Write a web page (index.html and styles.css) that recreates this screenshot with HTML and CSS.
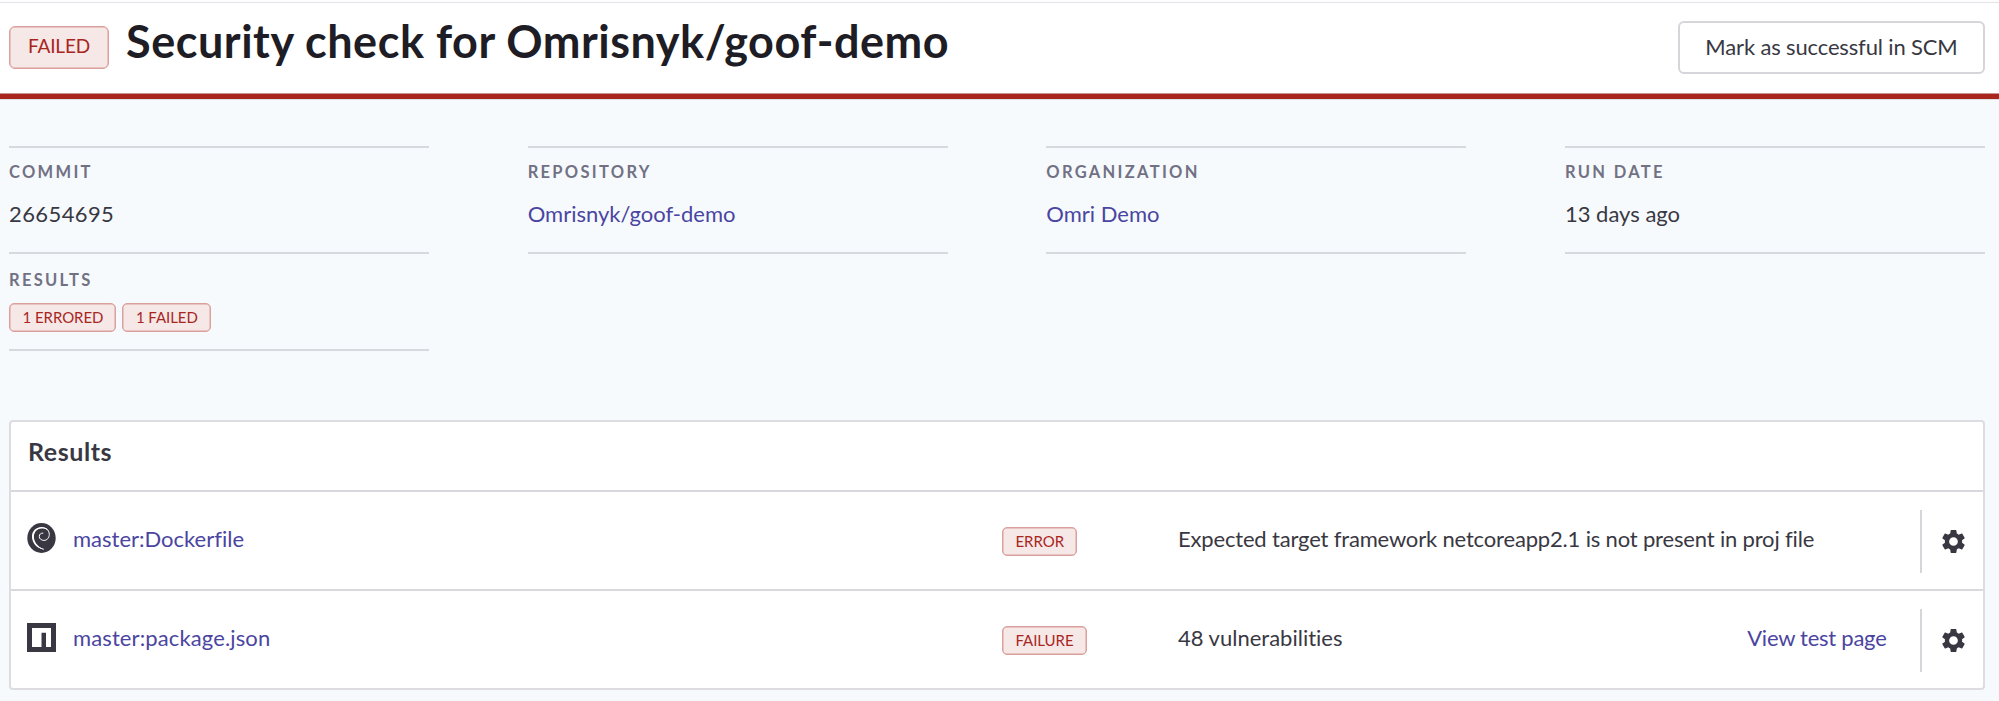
FILE: index.html
```html
<!DOCTYPE html>
<html lang="en">
<head>
<meta charset="utf-8">
<title>Security check for Omrisnyk/goof-demo</title>
<link rel="stylesheet" href="styles.css">
</head>
<body>
<svg class="sprite" aria-hidden="true">
  <symbol id="gear" viewBox="2 2 20 20">
    <path d="M19.43 12.98c.04-.32.07-.64.07-.98s-.03-.66-.07-.98l2.11-1.65c.19-.15.24-.42.12-.64l-2-3.46c-.12-.22-.39-.3-.61-.22l-2.49 1c-.52-.4-1.08-.73-1.69-.98l-.38-2.65C14.46 2.18 14.25 2 14 2h-4c-.25 0-.46.18-.49.42l-.38 2.65c-.61.25-1.17.59-1.69.98l-2.49-1c-.23-.09-.49 0-.61.22l-2 3.46c-.13.22-.07.49.12.64l2.11 1.65c-.04.32-.07.65-.07.98s.03.66.07.98l-2.11 1.65c-.19.15-.24.42-.12.64l2 3.46c.12.22.39.3.61.22l2.49-1c.52.4 1.08.73 1.69.98l.38 2.65c.03.24.24.42.49.42h4c.25 0 .46-.18.49-.42l.38-2.65c.61-.25 1.17-.59 1.69-.98l2.49 1c.23.09.49 0 .61-.22l2-3.46c.12-.22.07-.49-.12-.64l-2.11-1.65zM12 15.8a3.8 3.8 0 1 1 0-7.6 3.8 3.8 0 0 1 0 7.6z"/>
  </symbol>
</svg>

<header class="header">
  <span class="badge badge-large">FAILED</span>
  <h1 class="title">Security check for Omrisnyk/goof-demo</h1>
  <button class="button" type="button">Mark as successful in SCM</button>
</header>

<main class="content">
  <dl class="meta">
    <div class="meta-item"><dt>COMMIT</dt><dd class="digits">26654695</dd></div>
    <div class="meta-item"><dt>REPOSITORY</dt><dd><a href="#">Omrisnyk/goof-demo</a></dd></div>
    <div class="meta-item"><dt>ORGANIZATION</dt><dd><a href="#">Omri Demo</a></dd></div>
    <div class="meta-item"><dt>RUN DATE</dt><dd class="date">13 days ago</dd></div>
    <div class="meta-item meta-results">
      <dt>RESULTS</dt>
      <dd class="badges"><span class="badge">1 ERRORED</span><span class="badge">1 FAILED</span></dd>
    </div>
  </dl>

  <section class="panel">
    <h2 class="panel-title">Results</h2>
    <div class="row">
      <div class="file">
        <svg class="icon icon-debian" viewBox="0 0 29 30">
          <ellipse cx="14.5" cy="15" rx="14.2" ry="15" fill="#393842"/>
          <path d="M16.5 26.2C10 24.5 6 19.5 6 13.8 6 8.500 10 4.800 15 4.800c4.400 0 7.300 2.900 7.300 6.600 0 3.500-2.300 6-5.400 6-2.600 0-4.600-1.600-4.600-4 0-2.100 1.500-3.500 3.600-3.300" fill="none" stroke="#fff" stroke-width="1" stroke-linecap="round"/>
          <path d="M16.500 26.500C9.500 25 5 20 5 13.500 5 7.700 9.600 4 15 4.100c3.400.1 6.300 1.900 7.200 4.900-1.700-2.500-4.200-3.800-7.200-3.700C10.200 5.500 6.900 9 6.900 13.700c0 5.300 3.800 9.800 9.600 12.800z" fill="#fff"/>
        </svg>
        <a class="file-name" href="#">master:Dockerfile</a>
      </div>
      <div class="status"><span class="badge">ERROR</span></div>
      <div class="message message-long">Expected target framework netcoreapp2.1 is not present in proj file</div>
      <div class="settings"><svg class="gear"><use href="#gear"/></svg></div>
    </div>
    <div class="row">
      <div class="file">
        <svg class="icon icon-npm" viewBox="0 0 29 29">
          <path d="M0 0h29v29H0z" fill="#393842"/>
          <path d="M5 5h19v19h-5V9.700h-4.500V24H5z" fill="#fff"/>
        </svg>
        <a class="file-name file-package" href="#">master:package.json</a>
      </div>
      <div class="status"><span class="badge">FAILURE</span></div>
      <div class="message">48 vulnerabilities</div>
      <a class="view" href="#">View test page</a>
      <div class="settings"><svg class="gear"><use href="#gear"/></svg></div>
    </div>
  </section>
</main>
</body>
</html>
```
FILE: styles.css
```css
* { box-sizing: border-box; }
body {
  margin: 0;
  padding-top: 2px;
  min-height: 701px;
  background: #f6fafd;
  color: #393842;
  font: 22px/28px Lato, "Open Sans", sans-serif;
  font-variant-ligatures: none;
  overflow: hidden;
}
a { color: #4b45a1; text-decoration: none; }
.sprite { display: none; }

.header {
  display: flex;
  align-items: center;
  height: 97px;
  padding: 0 14px 2px 9px;
  background: #fff;
  border-top: 1px solid #e4e5ea;
  border-bottom: 5px solid #a9261e;
  box-shadow: inset 0 -1px #c99591, 0 1px #dde0e4, 0 -2px #fdfdfe;
}
.title {
  margin: 0 auto 0 17px;
  padding-bottom: 13px;
  color: #1e1c24;
  font-size: 45px;
  font-weight: 700;
  line-height: 54px;
  letter-spacing: .53px;
  white-space: nowrap;
}
.button {
  width: 307px;
  height: 53px;
  padding: 0 0 2px;
  border: 2px solid #d5d5da;
  border-radius: 6px;
  background: #fff;
  color: #393842;
  font: inherit;
  letter-spacing: -.15px;
}

.badge {
  display: inline-flex;
  align-items: center;
  height: 29px;
  padding: 0 12px 1px 12.5px;
  border: 1px solid #dba09c;
  box-shadow: inset 0 0 0 .5px #dba09c;
  border-radius: 5px;
  background: #f5e8e7;
  color: #a9261e;
  font-size: 15px;
  line-height: 18px;
  letter-spacing: -.05px;
  white-space: nowrap;
}
.badge-large {
  justify-content: center;
  width: 100px;
  height: 43px;
  padding: 0 0 3px;
  border-radius: 6px;
  font-size: 19px;
  line-height: 24px;
  letter-spacing: -.2px;
}

.content { padding: 47px 14px 0 9px; }
.meta {
  display: grid;
  grid-template-columns: repeat(4, 420px);
  justify-content: space-between;
  margin: 0;
}
.meta-item {
  height: 108px;
  margin-bottom: -2px;
  padding-top: 12px;
  border: solid #d6d9dd;
  border-width: 2px 0;
}
.meta-results { height: 99px; padding-top: 14px; margin-bottom: 0; }
dt {
  color: #727184;
  font-size: 16.5px;
  font-weight: 700;
  line-height: 24px;
  letter-spacing: 2.3px;
}
dd { margin: 16px 0 0; }
.digits { letter-spacing: .4px; }
.date { letter-spacing: 0; }
.badges { display: flex; gap: 6px; margin-top: 11px; }

.panel {
  margin-top: 69px;
  border: 2px solid #dcdce1;
  border-radius: 4px;
  background: #fff;
}
.panel-title {
  margin: 0;
  height: 68px;
  padding: 14px 0 0 17px;
  font-size: 25px;
  line-height: 30px;
  letter-spacing: .55px;
}
.row {
  display: grid;
  grid-template-columns: 991px 176px 1fr auto 63.5px;
  align-items: center;
  height: 99px;
  border-top: 2px solid #d8d9de;
}
.file { display: flex; align-items: center; gap: 17px; padding: 0 0 4px 16px; }
.icon { width: 29px; height: 30px; }
.icon-debian { margin-bottom: 2px; }
.icon-npm { height: 29px; }
.file-package { letter-spacing: .12px; }
.status { display: flex; padding-top: 2px; }
.message, .view { padding-bottom: 4px; white-space: nowrap; }
.message-long { letter-spacing: -.17px; }
.view { padding-right: 33px; letter-spacing: -.25px; }
.settings {
  grid-column: 5;
  display: flex;
  align-items: center;
  height: 63px;
  margin-top: 2px;
  padding-left: 20px;
  border-left: 2px solid #d5d5da;
}
.gear { width: 23px; height: 23px; fill: #393842; }
```
